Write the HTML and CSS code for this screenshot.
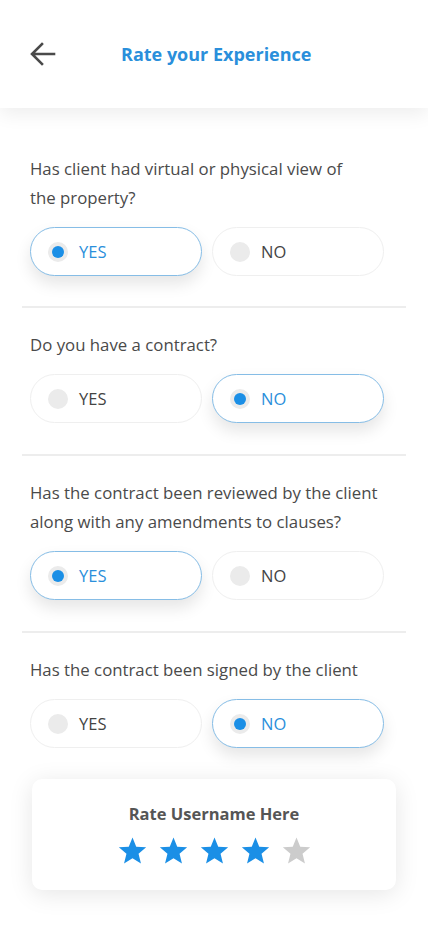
FILE: index.html
```html
<!DOCTYPE html>
<html>
<head>
<meta charset="utf-8">
<link rel="stylesheet" href="styles.css">
</head>
<body>
<header class="topbar">
  <svg class="back" width="26" height="24" viewBox="0 0 26 24"><path d="M24 12H3M12 2L2 12l10 10" fill="none" stroke="#4a4a4a" stroke-width="2.6" stroke-linecap="square"/></svg>
  <h1 class="title">Rate your Experience</h1>
</header>
<main class="content">
  <section class="question first">
    <p class="qtext">Has client had virtual or physical view of<br>the property?</p>
    <div class="options">
      <div class="opt selected"><span class="radio"></span>YES</div>
      <div class="opt"><span class="radio"></span>NO</div>
    </div>
  </section>
  <section class="question">
    <p class="qtext">Do you have a contract?</p>
    <div class="options">
      <div class="opt"><span class="radio"></span>YES</div>
      <div class="opt selected"><span class="radio"></span>NO</div>
    </div>
  </section>
  <section class="question">
    <p class="qtext">Has the contract been reviewed by the client<br>along with any amendments to clauses?</p>
    <div class="options">
      <div class="opt selected"><span class="radio"></span>YES</div>
      <div class="opt"><span class="radio"></span>NO</div>
    </div>
  </section>
  <section class="question last">
    <p class="qtext">Has the contract been signed by the client</p>
    <div class="options">
      <div class="opt"><span class="radio"></span>YES</div>
      <div class="opt selected"><span class="radio"></span>NO</div>
    </div>
  </section>
  <div class="card">
    <div class="card-title">Rate Username Here</div>
    <div class="stars">
      <svg class="star on" viewBox="0 0 24 24"><path d="M12 1.2l3.1 7.6 8.2.6-6.3 5.3 2 8L12 18.4l-7 4.3 2-8L.7 9.4l8.2-.6z"/></svg>
      <svg class="star on" viewBox="0 0 24 24"><path d="M12 1.2l3.1 7.6 8.2.6-6.3 5.3 2 8L12 18.4l-7 4.3 2-8L.7 9.4l8.2-.6z"/></svg>
      <svg class="star on" viewBox="0 0 24 24"><path d="M12 1.2l3.1 7.6 8.2.6-6.3 5.3 2 8L12 18.4l-7 4.3 2-8L.7 9.4l8.2-.6z"/></svg>
      <svg class="star on" viewBox="0 0 24 24"><path d="M12 1.2l3.1 7.6 8.2.6-6.3 5.3 2 8L12 18.4l-7 4.3 2-8L.7 9.4l8.2-.6z"/></svg>
      <svg class="star off" viewBox="0 0 24 24"><path d="M12 1.2l3.1 7.6 8.2.6-6.3 5.3 2 8L12 18.4l-7 4.3 2-8L.7 9.4l8.2-.6z"/></svg>
    </div>
  </div>
</main>
</body>
</html>
```
FILE: styles.css
```css
* { box-sizing: border-box; }
html, body { margin: 0; padding: 0; background: #fff; }
body {
  font-family: "Open Sans", "Lato", sans-serif;
  color: #4a4a4a;
  width: 428px;
  min-height: 926px;
  overflow: hidden;
}
.topbar {
  height: 108px;
  background: #fff;
  display: flex;
  align-items: center;
  padding: 0 0 0 30px;
  box-shadow: 0 6px 18px rgba(0,0,0,0.07);
  position: relative;
  z-index: 2;
}
.back { width: 26px; height: 24px; flex: none; }
.title {
  margin: 0 0 0 65px;
  font-size: 18px;
  font-weight: 700;
  color: #2a8fdb;
  letter-spacing: 0;
}
.content { padding: 0 22px; }
.question {
  border-bottom: 2px solid #ededed;
  padding: 22px 8px 31px;
}
.question.first { padding-top: 46px; padding-bottom: 30px; }
.question.last { border-bottom: none; padding-bottom: 31px; }
.qtext {
  margin: 0 0 15px;
  font-size: 16.8px;
  line-height: 29px;
  color: #4a4a4a;
  white-space: nowrap;
}
.options {
  display: flex;
  gap: 10px;
}
.opt {
  width: 172px;
  height: 49px;
  border: 1px solid #efefef;
  border-radius: 25px;
  display: flex;
  align-items: center;
  padding-left: 17px;
  font-size: 16.5px;
  color: #444;
  background: #fff;
}
.opt.selected {
  border-color: #86bde6;
  color: #2a8fdb;
  box-shadow: 0 8px 16px rgba(0,0,0,0.10);
}
.radio {
  width: 20px;
  height: 20px;
  border-radius: 50%;
  background: #ebebeb;
  margin-right: 11px;
  display: flex;
  align-items: center;
  justify-content: center;
  flex: none;
}
.opt.selected .radio::after {
  content: "";
  width: 12px;
  height: 12px;
  border-radius: 50%;
  background: #1b8fe6;
}
.card {
  margin: 0 10px;
  background: #fff;
  border-radius: 10px;
  box-shadow: 0 4px 24px rgba(0,0,0,0.10);
  height: 111px;
  display: flex;
  flex-direction: column;
  align-items: center;
  padding-top: 24px;
}
.card-title {
  font-size: 16.5px;
  font-weight: 700;
  color: #555;
  line-height: 22px;
}
.stars {
  display: flex;
  gap: 12px;
  margin-top: 11px;
}
.star { width: 29px; height: 29px; }
.star.on { fill: #1b8fe6; }
.star.off { fill: #cccccc; }
```
